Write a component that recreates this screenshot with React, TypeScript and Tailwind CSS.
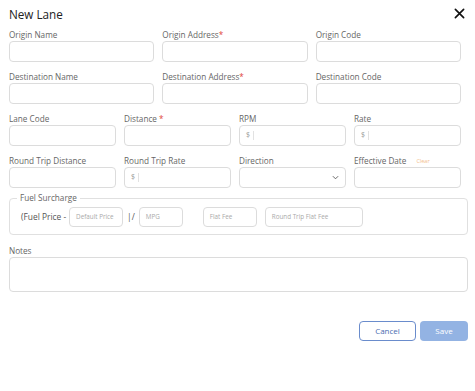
import React from 'react'

const inputBox = 'h-[21px] w-full rounded-[4px] border border-[#dcdcdc] bg-white'

function Label({ text, required, spaced }: { text: string, required?: boolean, spaced?: boolean }) {
    return (
        <div className="h-[12px] text-[8.2px] leading-[12px] text-[#666]">
            {text}
            {required && <span className="text-[#e0453a]">{spaced ? ' *' : '*'}</span>}
        </div>
    )
}

function Field({ label, required, spaced, children }: { label: string, required?: boolean, spaced?: boolean, children?: React.ReactNode }) {
    return (
        <div className="flex flex-col">
            <Label text={label} required={required} spaced={spaced} />
            {children ?? <div className={inputBox} />}
        </div>
    )
}

// "$ |" prefix used by the money inputs
function MoneyInput() {
    return (
        <div className={`${inputBox} flex items-center gap-[3px] pl-[6px] text-[7px] text-[#999]`}>
            <span>$</span>
            <span className="h-[9px] w-px bg-[#e2e2e2]" />
        </div>
    )
}

function SmallInput({ placeholder, w }: { placeholder: string, w: string }) {
    return (
        <div className={`${w} flex h-[20px] items-center rounded-[4px] border border-[#dcdcdc] pl-[6px] text-[6.3px] text-[#aaa]`}>
            {placeholder}
        </div>
    )
}

export default function App() {
    return (
        <div
            className="h-[391px] w-[475px] bg-white pl-[9px] pr-[7px] text-[#555]"
            style={{ fontFamily: '"Open Sans", "Liberation Sans", sans-serif' }}
        >
            {/* Header */}
            <div className="flex h-[29px] items-start justify-between pt-[7px]">
                <div className="text-[11.7px] font-medium leading-[14px] text-[#222]">New Lane</div>
                <svg width="11" height="11" viewBox="0 0 12 12" className="mr-[3px] mt-[1px]">
                    <path d="M1.5 1.5 L10.5 10.5 M10.5 1.5 L1.5 10.5" stroke="#111" strokeWidth="1.8" strokeLinecap="round" />
                </svg>
            </div>

            <div className="w-[452px]">
                <div className="grid grid-cols-3 gap-x-[8px]">
                    <Field label="Origin Name" />
                    <Field label="Origin Address" required />
                    <Field label="Origin Code" />
                </div>
                <div className="mt-[9px] grid grid-cols-3 gap-x-[8px]">
                    <Field label="Destination Name" />
                    <Field label="Destination Address" required />
                    <Field label="Destination Code" />
                </div>
                <div className="mt-[9px] grid grid-cols-4 gap-x-[8px]">
                    <Field label="Lane Code" />
                    <Field label="Distance" required spaced />
                    <Field label="RPM"><MoneyInput /></Field>
                    <Field label="Rate"><MoneyInput /></Field>
                </div>
                <div className="mt-[9px] grid grid-cols-4 gap-x-[8px]">
                    <Field label="Round Trip Distance" />
                    <Field label="Round Trip Rate"><MoneyInput /></Field>
                    <Field label="Direction">
                        <div className={`${inputBox} flex items-center justify-end pr-[6px]`}>
                            <svg width="7" height="5" viewBox="0 0 8 5">
                                <path d="M1 1 L4 4 L7 1" stroke="#555" strokeWidth="1" fill="none" />
                            </svg>
                        </div>
                    </Field>
                    <div className="flex flex-col">
                        <div className="flex h-[12px] items-center gap-[10px] text-[8.2px] leading-[12px] text-[#666]">
                            Effective Date
                            <span className="text-[5.5px] text-[#f3c08e]">Clear</span>
                        </div>
                        <div className={inputBox} />
                    </div>
                </div>
            </div>

            {/* Fuel surcharge group */}
            <fieldset className="mt-[4px] h-[43px] rounded-[4px] border border-[#e0e0e0] px-[11px] pb-[6px]">
                <legend className="ml-[-4px] px-[3px] text-[8.2px] leading-[12px] text-[#666]">Fuel Surcharge</legend>
                <div className="mt-[3px] flex items-center">
                    <span className="mr-[3px] text-[8.4px] text-[#555]">(Fuel Price -</span>
                    <SmallInput placeholder="Default Price" w="w-[54px]" />
                    <span className="mx-[4px] text-[8.4px] text-[#555]">|/</span>
                    <SmallInput placeholder="MPG" w="w-[44px]" />
                    <div className="w-[20px]" />
                    <SmallInput placeholder="Flat Fee" w="w-[54px]" />
                    <div className="w-[8px]" />
                    <SmallInput placeholder="Round Trip Flat Fee" w="w-[98px]" />
                </div>
            </fieldset>

            {/* Notes */}
            <div className="mt-[10px]">
                <Label text="Notes" />
                <div className="h-[35px] w-full rounded-[4px] border border-[#dcdcdc]" />
            </div>

            {/* Footer */}
            <div className="mt-[29px] flex justify-end gap-[4px]">
                <button className="h-[20px] w-[57px] rounded-[4px] border border-[#6a8ccc] text-[8px] font-medium text-[#4a6db0]">
                    Cancel
                </button>
                <button className="h-[20px] w-[48px] rounded-[4px] bg-[#93b3e3] text-[8px] font-medium text-white">
                    Save
                </button>
            </div>
        </div>
    )
}
